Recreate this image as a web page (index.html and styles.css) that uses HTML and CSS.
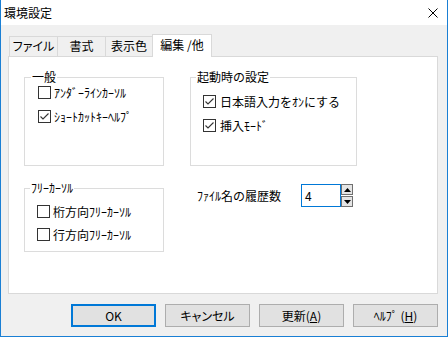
FILE: index.html
```html
<!DOCTYPE html>
<html lang="ja">
  <head>
    <meta charset="UTF-8" />
    <title>環境設定</title>
    <link rel="stylesheet" href="styles.css">
  </head>
  <body>
    <div class="window">
      <div class="titlebar">
        <span class="title">環境設定</span>
        <svg class="close" width="10" height="10" viewBox="0 0 10 10">
          <path d="M0.5 0.5 L9.5 9.5 M9.5 0.5 L0.5 9.5" stroke="#000" stroke-width="1" />
        </svg>
      </div>

      <div class="client">
        <div class="tabs">
          <div class="tab t1">ファイル</div>
          <div class="tab t2">書式</div>
          <div class="tab t3">表示色</div>
          <div class="tab active">編集 /他</div>
        </div>

        <div class="panel">
          <div class="grid">
            <fieldset class="group general">
              <legend>一般</legend>
              <div class="opts">
                <label class="opt"><span class="box"></span>ｱﾝﾀﾞｰﾗｲﾝｶｰｿﾙ</label>
                <label class="opt"><span class="box checked"><svg width="11" height="11" viewBox="0 0 11 11"><path d="M1.5 5.5 L4 8 L9.5 2.5" fill="none" stroke="#333" stroke-width="1.1" /></svg></span>ｼｮｰﾄｶｯﾄｷｰﾍﾙﾌﾟ</label>
              </div>
            </fieldset>

            <fieldset class="group startup">
              <legend>起動時の設定</legend>
              <div class="opts">
                <label class="opt"><span class="box checked"><svg width="11" height="11" viewBox="0 0 11 11"><path d="M1.5 5.5 L4 8 L9.5 2.5" fill="none" stroke="#333" stroke-width="1.1" /></svg></span>日本語入力をｵﾝにする</label>
                <label class="opt"><span class="box checked"><svg width="11" height="11" viewBox="0 0 11 11"><path d="M1.5 5.5 L4 8 L9.5 2.5" fill="none" stroke="#333" stroke-width="1.1" /></svg></span>挿入ﾓｰﾄﾞ</label>
              </div>
            </fieldset>

            <fieldset class="group free">
              <legend>ﾌﾘｰｶｰｿﾙ</legend>
              <div class="opts">
                <label class="opt"><span class="box"></span>桁方向ﾌﾘｰｶｰｿﾙ</label>
                <label class="opt"><span class="box"></span>行方向ﾌﾘｰｶｰｿﾙ</label>
              </div>
            </fieldset>

            <div class="history">
              <span class="history-label">ﾌｧｲﾙ名の履歴数</span>
              <div class="num">4</div>
              <div class="spin">
                <div class="spin-btn"><svg width="7" height="4" viewBox="0 0 7 4"><path d="M0 4 L3.5 0 L7 4 Z" fill="#000" /></svg></div>
                <div class="spin-btn"><svg width="7" height="4" viewBox="0 0 7 4"><path d="M0 0 L3.5 4 L7 0 Z" fill="#000" /></svg></div>
              </div>
            </div>
          </div>
        </div>

        <div class="buttons">
          <button class="btn default">OK</button>
          <button class="btn">キャンセル</button>
          <button class="btn">更新(<u>A</u>)</button>
          <button class="btn">ﾍﾙﾌﾟ (<u>H</u>)</button>
        </div>
      </div>
    </div>
  </body>
</html>
```

FILE: styles.css
```css
body {
  margin: 0;
  font-family: "Noto Sans CJK JP", sans-serif;
  font-size: 12px;
  color: #000;
  background: #fff;
}

.window {
  width: 448px;
  height: 337px;
  box-sizing: border-box;
  border: 1px solid #1a7fd4;
  border-top: none;
  background: #f0f0f0;
  display: flex;
  flex-direction: column;
}

.titlebar {
  height: 25px;
  flex: none;
  background: #fff;
  display: flex;
  align-items: center;
  justify-content: space-between;
  padding: 0 9px 0 3px;
}

.title {
  font-size: 12px;
  line-height: 14px;
}

.client {
  padding: 9px 9px 0 7px;
  display: flex;
  flex-direction: column;
}

.tabs {
  display: flex;
  align-items: flex-end;
  padding-left: 1px;
  height: 22px;
}

.tab {
  box-sizing: border-box;
  height: 20px;
  border: 1px solid #d9d9d9;
  border-bottom: none;
  margin-right: -1px;
  background: #f0f0f0;
  text-align: center;
  line-height: 18px;
  font-feature-settings: "palt";
}

.t1 { width: 49px; }
.t2 { width: 49px; }
.t3 { width: 48px; }

.tab.active {
  position: relative;
  z-index: 1;
  width: 60px;
  height: 23px;
  margin-bottom: -1px;
  background: #fff;
  line-height: 20px;
}

.panel {
  box-sizing: border-box;
  height: 238px;
  background: #fff;
  border: 1px solid #d9d9d9;
}

.grid {
  display: grid;
  grid-template-columns: 140px 167px;
  column-gap: 26px;
  row-gap: 15px;
  padding: 13px 0 0 15px;
}

.group {
  margin: 0;
  padding: 0 0 0 12px;
  border: 1px solid #dcdcdc;
  min-width: 0;
  box-sizing: border-box;
}

.general,
.startup {
  height: 96px;
}

.general {
  padding-left: 13px;
}

.free {
  height: 71px;
}

legend {
  padding: 0 1px;
  margin-left: -7px;
  line-height: 14px;
}

.opts {
  display: flex;
  flex-direction: column;
  gap: 11px;
}

.general .opts { padding-top: 2px; }
.startup .opts { padding-top: 11px; }
.free .opts { padding-top: 10px; gap: 10px; }

.opt {
  display: flex;
  align-items: center;
  gap: 3px;
  height: 13px;
  white-space: nowrap;
}

.startup .opt {
  gap: 4px;
}

.box {
  width: 13px;
  height: 13px;
  box-sizing: border-box;
  border: 1px solid #333;
  background: #fff;
  display: flex;
  align-items: center;
  justify-content: center;
  flex: none;
}

.history {
  display: flex;
  align-items: flex-start;
  padding: 3px 0 0 7px;
}

.history-label {
  width: 104px;
  line-height: 23px;
}

.num {
  box-sizing: border-box;
  width: 40px;
  height: 23px;
  border: 1px solid #0078d7;
  padding-left: 3px;
  line-height: 21px;
}

.spin {
  display: flex;
  flex-direction: column;
  width: 12px;
}

.spin-btn {
  box-sizing: border-box;
  height: 11px;
  margin-bottom: 1px;
  background: #e5e5e5;
  border: 1px solid #707070;
  display: flex;
  align-items: center;
  justify-content: center;
}

.buttons {
  display: flex;
  justify-content: flex-end;
  gap: 9px;
  margin-top: 10px;
}

.btn {
  box-sizing: border-box;
  width: 85px;
  height: 23px;
  background: #e1e1e1;
  border: 1px solid #adadad;
  font-family: "Noto Sans CJK JP", sans-serif;
  font-size: 12px;
  color: #000;
  padding: 0;
  font-feature-settings: "palt";
}

.btn.default {
  border: 2px solid #0078d7;
}
```
